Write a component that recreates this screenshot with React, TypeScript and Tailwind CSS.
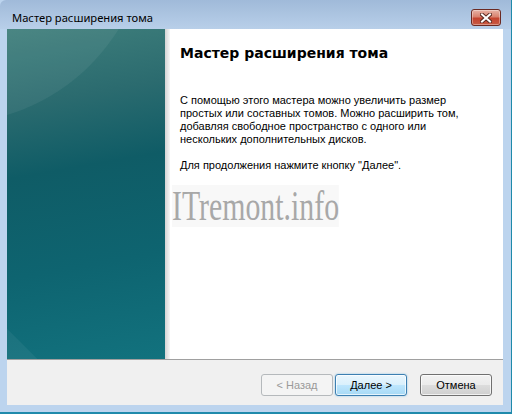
const dlg = { fontFamily: '"Liberation Sans", Arial, sans-serif' };

function CloseButton() {
  return (
    <div className="flex h-[17px] w-[30px] items-center justify-center rounded-[3px] border border-[#6b2a22] bg-[linear-gradient(#e8b3a6,#d9826f_45%,#c4432f_55%,#c85c45)] shadow-[inset_0_0_0_1px_rgba(255,255,255,0.35)]">
      <svg width="12" height="10" viewBox="0 0 12 10">
        <path
          d="M2 1.5 L10 8.5 M10 1.5 L2 8.5"
          stroke="#5a2a22"
          strokeWidth="4"
          strokeLinecap="square"
        />
        <path
          d="M2 1.5 L10 8.5 M10 1.5 L2 8.5"
          stroke="#ffffff"
          strokeWidth="2"
          strokeLinecap="square"
        />
      </svg>
    </div>
  );
}

function WizButton({
  label,
  kind,
  className = "",
}: {
  label: string;
  kind: "disabled" | "default" | "normal";
  className?: string;
}) {
  const styles = {
    disabled: "border-[#b5b9bc] bg-[#f4f4f4] text-[#9a9a9a]",
    default:
      "border-[#3c7fb1] bg-[linear-gradient(#eaf6fd,#d9f0fc_50%,#bee6fd_50%,#a7d9f5)] text-black shadow-[inset_0_0_0_1px_rgba(255,255,255,0.7),0_0_2px_rgba(60,160,220,0.6)]",
    normal:
      "border-[#707070] bg-[linear-gradient(#f2f2f2,#ebebeb_50%,#dddddd_50%,#cfcfcf)] text-black shadow-[inset_0_0_0_1px_rgba(255,255,255,0.7)]",
  }[kind];
  return (
    <div
      className={`flex h-[22px] w-[72px] items-center justify-center rounded-[3px] border text-[11px] ${styles} ${className}`}
    >
      {label}
    </div>
  );
}

export default function App() {
  return (
    <div
      className="relative flex h-[414px] w-[512px] flex-col overflow-hidden border-r border-b-2 border-[#1f8aab] bg-[#bcd4ee]"
      style={dlg}
    >
      {/* caption */}
      <div className="flex h-[29px] shrink-0 items-start justify-between rounded-tl-[6px] bg-[linear-gradient(#a0bad9,#b8cfe9)] pl-[12px] pr-[10px]">
        <span
          className="mt-[10px] text-[11.2px] leading-[15px] text-black"
          style={{ fontFamily: '"Noto Sans", "Open Sans", sans-serif' }}
        >
          Мастер расширения тома
        </span>
        <div className="mt-[9px]">
          <CloseButton />
        </div>
      </div>

      <div className="ml-[7px] mr-[8px] flex flex-col">
        <div className="flex h-[330px]">
          {/* side banner */}
          <div className="relative w-[158px] overflow-hidden bg-[linear-gradient(170deg,#3f7f7c,#2b6b6f_22%,#0f5c66_42%,#0e6470_70%,#12727e)]">
            <div className="absolute -left-[260px] -top-[295px] h-[390px] w-[400px] rounded-[50%] bg-white/[0.06]" />
            <div className="absolute -bottom-[30px] -left-[30px] h-[50px] w-[60px] rotate-45 bg-white/[0.05]" />
          </div>
          <div className="w-[5px] bg-[linear-gradient(90deg,#d4d4d4,#f6f6f6)]" />
          {/* page body */}
          <div className="relative flex-1 bg-white pl-[10px] pt-[16px]">
            <h1
              className="text-[14px] font-bold leading-[17px] text-black"
              style={{ fontFamily: '"DejaVu Sans", Verdana, sans-serif' }}
            >
              Мастер расширения тома
            </h1>
            <div className="mt-[32px] text-[11px] leading-[13px] text-black">
              <p>
                С помощью этого мастера можно увеличить размер
                <br />
                простых или составных томов. Можно расширить том,
                <br />
                добавляя свободное пространство с одного или
                <br />
                нескольких дополнительных дисков.
              </p>
              <p className="mt-[13px]">
                Для продолжения нажмите кнопку "Далее".
              </p>
            </div>
            <div
              className="absolute left-[2px] top-[156px] origin-left scale-x-[0.71] bg-[#f8f8f8] text-[42px] leading-[42px] text-[#a8a8a8]"
              style={{ fontFamily: '"Liberation Serif", serif' }}
            >
              ITremont.info
            </div>
          </div>
        </div>
        <div className="h-px bg-[#a0a0a0]" />
        {/* footer buttons */}
        <div className="flex h-[45px] items-start justify-end bg-[#f0f0f0] pr-[11px] pt-[14px]">
          <WizButton label="< Назад" kind="disabled" />
          <WizButton label="Далее >" kind="default" className="ml-[2px]" />
          <WizButton label="Отмена" kind="normal" className="ml-[13px]" />
        </div>
      </div>
    </div>
  );
}
